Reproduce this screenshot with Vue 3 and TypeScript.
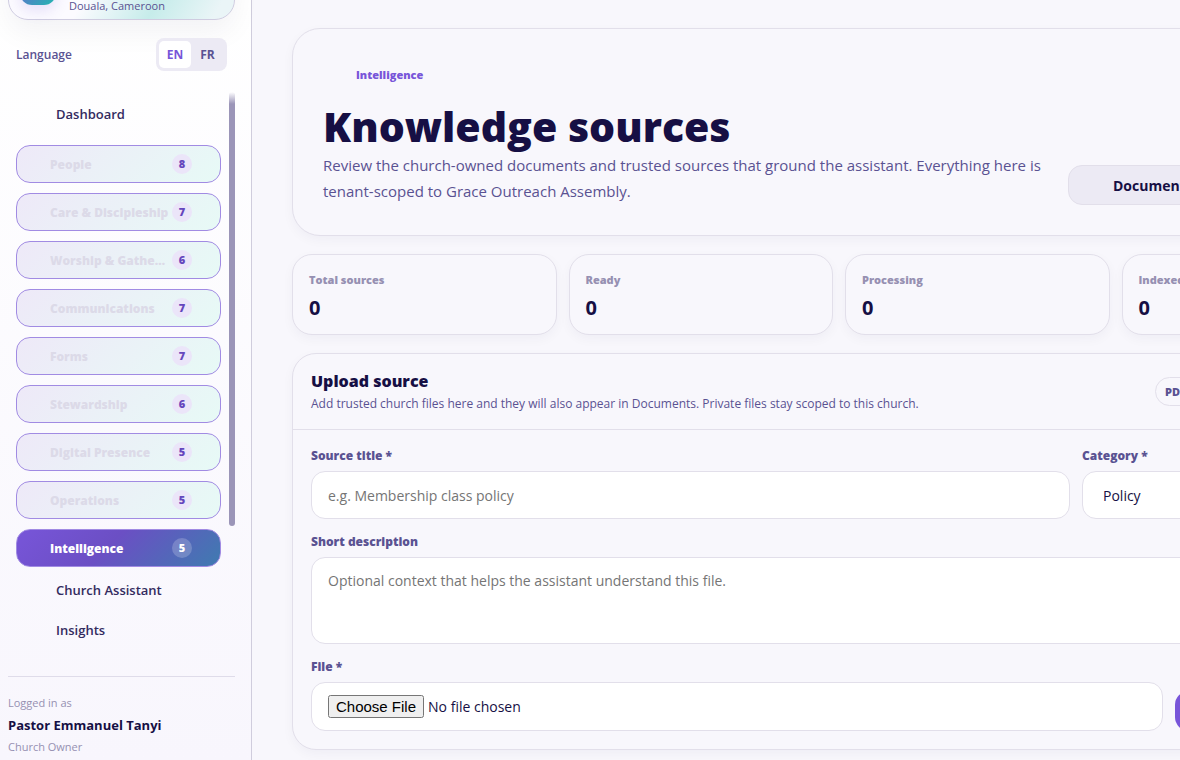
<script setup lang="ts">
import { ref } from 'vue'

interface NavGroup {
  label: string
  count: number
}

const groups: NavGroup[] = [
  { label: 'People', count: 8 },
  { label: 'Care & Discipleship', count: 7 },
  { label: 'Worship & Gatherings', count: 6 },
  { label: 'Communications', count: 7 },
  { label: 'Forms', count: 7 },
  { label: 'Stewardship', count: 6 },
  { label: 'Digital Presence', count: 5 },
  { label: 'Operations', count: 5 },
  { label: 'Intelligence', count: 5 },
]
const activeGroup = ref('Intelligence')
const subLinks = ['Church Assistant', 'Insights']

const languages = ['EN', 'FR']
const language = ref('EN')

const stats = [
  { label: 'Total sources', value: 0 },
  { label: 'Ready', value: 0 },
  { label: 'Processing', value: 0 },
  { label: 'Indexed', value: 0 },
]

const title = ref('')
const category = ref('Policy')
const description = ref('')
</script>

<template>
  <div class="shell">
    <aside class="sidebar">
      <div class="org">
        <span class="org-logo"></span>
        <span class="org-place">Douala, Cameroon</span>
      </div>

      <div class="language">
        <span>Language</span>
        <div class="toggle" role="group" aria-label="Language">
          <button
            v-for="code in languages"
            :key="code"
            type="button"
            :class="{ on: code === language }"
            @click="language = code"
          >{{ code }}</button>
        </div>
      </div>

      <div class="nav-wrap">
        <nav class="nav">
          <a class="nav-link" href="#dashboard">Dashboard</a>
          <button
            v-for="g in groups"
            :key="g.label"
            type="button"
            class="group"
            :class="{ active: g.label === activeGroup }"
            @click="activeGroup = g.label"
          >
            <span class="group-label">{{ g.label }}</span>
            <span class="count">{{ g.count }}</span>
          </button>
          <div class="sub">
            <a v-for="s in subLinks" :key="s" class="nav-link" href="#">{{ s }}</a>
          </div>
        </nav>
        <div class="track"><div class="thumb"></div></div>
      </div>

      <footer class="user">
        <span>Logged in as</span>
        <strong>Pastor Emmanuel Tanyi</strong>
        <span>Church Owner</span>
      </footer>
    </aside>

    <main class="main">
      <div class="content">
        <section class="hero">
          <div class="hero-text">
            <p class="eyebrow">Intelligence</p>
            <h1>Knowledge sources</h1>
            <p class="lead">Review the church-owned documents and trusted sources that ground the assistant. Everything here is tenant-scoped to Grace Outreach Assembly.</p>
          </div>
          <div class="hero-actions">
            <a class="btn" href="#documents">Documents</a>
          </div>
        </section>

        <section class="stats">
          <article v-for="s in stats" :key="s.label" class="stat">
            <span>{{ s.label }}</span>
            <strong>{{ s.value }}</strong>
          </article>
        </section>

        <section class="panel">
          <header class="panel-head">
            <div>
              <h2>Upload source</h2>
              <p>Add trusted church files here and they will also appear in Documents. Private files stay scoped to this church.</p>
            </div>
            <span class="pill">PDF, DOCX, TXT, MD, CSV</span>
          </header>
          <form class="form" @submit.prevent>
            <div class="row row-title">
              <div class="field">
                <label for="title">Source title *</label>
                <input id="title" v-model="title" type="text" placeholder="e.g. Membership class policy" />
              </div>
              <div class="field">
                <label for="category">Category *</label>
                <select id="category" v-model="category">
                  <option>Policy</option>
                </select>
              </div>
            </div>
            <div class="field">
              <label for="description">Short description</label>
              <textarea id="description" v-model="description" placeholder="Optional context that helps the assistant understand this file."></textarea>
            </div>
            <div class="row row-file">
              <div class="field">
                <label for="file">File *</label>
                <input id="file" type="file" />
              </div>
              <button type="submit" class="submit" aria-label="Upload source"></button>
            </div>
          </form>
        </section>
      </div>
    </main>
  </div>
</template>

<style>
body {
  background: #f8f7fc;
}
</style>

<style scoped>
.shell,
.shell * {
  box-sizing: border-box;
}
.shell {
  display: flex;
  height: 100vh;
  overflow: hidden;
  background: #f8f7fc;
  color: #160f44;
  font-family: "Open Sans", "Noto Sans", sans-serif;
  font-size: 15px;
}
button,
input,
select,
textarea {
  font: inherit;
  color: inherit;
  margin: 0;
}
button {
  cursor: pointer;
}
a {
  color: inherit;
  text-decoration: none;
}
p,
h1,
h2 {
  margin: 0;
}

/* Sidebar */
.sidebar {
  flex: none;
  display: flex;
  flex-direction: column;
  width: 252px;
  padding: 0 16px 0 8px;
  border-right: 1px solid #d0cddd;
  background: linear-gradient(180deg, #ffffff 0%, #f8f6fd 100%);
}
.org {
  flex: none;
  display: flex;
  align-items: flex-end;
  gap: 13px;
  height: 80px;
  margin-top: -60px;
  padding: 0 11px 6px;
  border: 1px solid #cfcce0;
  border-radius: 20px;
  background: linear-gradient(120deg, #fcfbff 40%, #c6ecea 68%, #eaf5f7 92%);
  box-shadow: 0 12px 28px rgba(22, 15, 68, 0.05);
}
.org-logo {
  width: 36px;
  height: 36px;
  margin-bottom: 8px;
  border-radius: 12px;
  background: linear-gradient(135deg, #7855d9, #22b8b0);
  box-shadow: 0 6px 14px rgba(120, 85, 217, 0.16);
}
.org-place {
  font-size: 11px;
  line-height: 14px;
  color: #5a5292;
}
.language {
  display: flex;
  align-items: center;
  justify-content: space-between;
  padding: 18px 8px 0;
  font-size: 12px;
  font-weight: 600;
  color: #5a5292;
}
.toggle {
  display: flex;
  padding: 3px;
  border-radius: 8px;
  background: #eceaf4;
}
.toggle button {
  width: 32px;
  height: 27px;
  padding: 0;
  border: 0;
  border-radius: 5px;
  background: none;
  font-weight: 700;
}
.toggle button + button {
  width: 33px;
}
.toggle .on {
  background: #fff;
  color: #7855d9;
}
.nav-wrap {
  flex: 1;
  display: flex;
  min-height: 0;
  margin-top: 21px;
}
.nav {
  flex: 1;
  min-width: 0;
  padding: 2px 8px 0;
}
.nav-link {
  display: flex;
  align-items: center;
  height: 40px;
  padding-left: 40px;
  font-size: 13px;
  font-weight: 600;
  color: #332b60;
}
.group {
  display: flex;
  align-items: center;
  gap: 2px;
  width: 100%;
  height: 38px;
  margin-top: 10px;
  padding: 0 28px 0 33px;
  border: 1px solid #a18be3;
  border-radius: 14px;
  background: linear-gradient(135deg, #eee9f8, #e7faf6);
  color: #dcdae8;
  font-size: 12px;
  font-weight: 800;
  text-align: left;
}
.nav-link + .group {
  margin-top: 11px;
}
.group-label {
  flex: 1;
  min-width: 0;
  overflow: hidden;
  text-overflow: ellipsis;
  white-space: nowrap;
}
.count {
  flex: none;
  width: 20px;
  border-radius: 10px;
  background: #ebe5f9;
  color: #6546bd;
  font-size: 11px;
  line-height: 20px;
  text-align: center;
}
.group.active {
  background: linear-gradient(135deg, #7855d9 0%, #6b4fc4 45%, #3f7bb0 100%);
  color: #fff;
}
.active .count {
  background: rgba(255, 255, 255, 0.2);
  color: #fff;
}
.sub {
  padding-top: 3px;
}
.track {
  flex: none;
  width: 6px;
}
.thumb {
  height: 434px;
  border-radius: 3px;
  background: linear-gradient(180deg, rgba(155, 149, 184, 0) 0, #9b95b8 12px);
}
.user {
  display: flex;
  flex-direction: column;
  padding: 15px 0 2px;
  border-top: 1px solid #dfdcea;
  font-size: 11px;
  line-height: 22px;
  color: #9690b2;
}
.user strong {
  font-size: 13px;
  font-weight: 700;
  color: #160f44;
}

/* Main column */
.main {
  flex: 1;
  min-width: 0;
  padding: 28px 40px 0;
  overflow: hidden;
}
.content {
  display: flex;
  flex-direction: column;
  gap: 18px;
  min-width: 1094px;
}
.hero,
.stat,
.panel {
  border: 1px solid #e2dfea;
  background: #f8f7fc;
  box-shadow: 0 4px 12px rgba(22, 15, 68, 0.04);
}
.hero {
  display: flex;
  align-items: flex-end;
  justify-content: space-between;
  padding: 30px;
  border-radius: 28px;
}
.hero-text {
  max-width: 730px;
  padding-bottom: 1px;
}
.eyebrow {
  padding: 6px 0 6px 33px;
  font-size: 11px;
  font-weight: 800;
  line-height: 20px;
  color: #7855d9;
}
h1 {
  margin: 11px 0 2px;
  font-size: 41px;
  font-weight: 800;
  line-height: 48px;
}
.lead {
  line-height: 26px;
  color: #5a5292;
}
.hero-actions {
  flex: none;
  width: 287px;
}
.btn {
  display: inline-flex;
  align-items: center;
  height: 40px;
  padding: 0 20px 0 44px;
  border: 1px solid #e2dfea;
  border-radius: 14px;
  background: #eceaf4;
  font-size: 14px;
  font-weight: 700;
}
.stats {
  display: grid;
  grid-template-columns: repeat(4, minmax(0, 1fr));
  gap: 12px;
}
.stat {
  display: flex;
  flex-direction: column;
  gap: 10px;
  padding: 16px;
  border-radius: 20px;
}
.stat span {
  font-size: 11px;
  font-weight: 800;
  line-height: 17px;
  color: #9690b2;
}
.stat strong {
  font-size: 20px;
  font-weight: 700;
  line-height: 20px;
}
.panel {
  border-radius: 24px;
}
.panel-head {
  display: flex;
  align-items: center;
  justify-content: space-between;
  padding: 16px 18px;
  border-bottom: 1px solid #e2dfea;
}
h2 {
  font-size: 16px;
  font-weight: 800;
  line-height: 22px;
}
.panel-head p {
  margin-top: 2px;
  font-size: 12px;
  line-height: 19px;
  color: #5a5292;
}
.pill {
  flex: none;
  width: 212px;
  padding: 0 9px;
  border: 1px solid #e2dfea;
  border-radius: 15px;
  font-size: 11px;
  font-weight: 800;
  line-height: 27px;
  color: #5a5292;
}
.form {
  display: flex;
  flex-direction: column;
  gap: 13px;
  padding: 16px 18px 18px;
}
.row {
  display: grid;
  gap: 12px;
}
.row-title {
  grid-template-columns: minmax(0, 1fr) 285px;
}
.row-file {
  grid-template-columns: minmax(0, 1fr) 192px;
  align-items: end;
}
.field {
  display: flex;
  flex-direction: column;
  gap: 6px;
}
.field label {
  font-size: 12px;
  font-weight: 800;
  line-height: 19px;
  color: #5a5292;
}
.field input,
.field select,
.field textarea {
  display: block;
  width: 100%;
  height: 48px;
  padding: 0 16px;
  border: 1px solid #e2dfea;
  border-radius: 14px;
  outline: 0;
  background: #fff;
  font-size: 14px;
}
.field select {
  padding: 0 20px;
  appearance: none;
}
.field textarea {
  height: 87px;
  padding: 12px 16px;
  line-height: 22px;
  resize: none;
}
.field ::placeholder {
  color: #757575;
}
.field input[type="file"] {
  height: 49px;
  padding: 12px 16px;
}
.field ::file-selector-button {
  font-family: "Liberation Sans", Arial, sans-serif;
  font-size: 15px;
}
.submit {
  height: 40px;
  border: 0;
  border-radius: 14px;
  background: #7855d9;
}
</style>
